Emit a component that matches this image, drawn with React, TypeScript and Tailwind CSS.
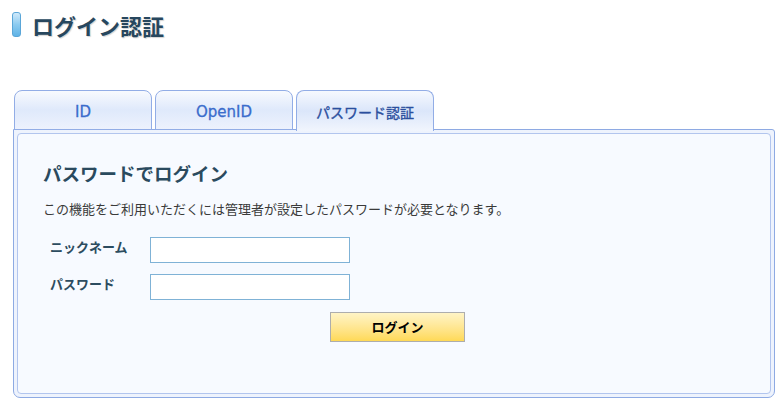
import React from 'react';

const jp = { fontFamily: '"Noto Sans CJK JP", "Noto Sans", sans-serif' };
const latin = { fontFamily: '"DejaVu Sans", "Noto Sans CJK JP", sans-serif' };

const tabs = [
    { label: 'ID', active: false, font: latin },
    { label: 'OpenID', active: false, font: latin },
    { label: 'パスワード認証', active: true, font: jp },
];

export default function App() {
    return (
        <div className="w-[780px] h-[402px] bg-white overflow-hidden" style={jp}>
            {/* page title */}
            <div className="flex items-center pl-[12px] pt-[12px] h-[37px]">
                <div className="w-[9px] h-[25px] rounded-[3px] border border-[#5aa6d8] bg-gradient-to-b from-[#cfe9fa] via-[#8ccbf0] to-[#5fb3e6]" />
                <h1 className="ml-[11px] text-[22px] font-bold leading-none text-[#27475e] [text-shadow:1px_1px_1px_rgba(0,0,0,0.18)]">
                    ログイン認証
                </h1>
            </div>

            {/* tabs */}
            <div className="relative z-10 flex items-end gap-[3px] pl-[14px] mt-[53px] h-[40px]">
                {tabs.map((t) =>
                    t.active ? (
                        <div
                            key={t.label}
                            className="w-[138px] h-[41px] -mb-[1px] flex items-center justify-center pt-[3px] rounded-t-[8px] border border-b-0 border-[#92ade6] bg-gradient-to-b from-[#f6f9fe] via-[#dbe6fa] to-[#f1f5fd] text-[14px] text-[#2b4f9e] [-webkit-text-stroke:0.35px_#2b4f9e]"
                            style={t.font}
                        >
                            {t.label}
                        </div>
                    ) : (
                        <div
                            key={t.label}
                            className="w-[138px] h-[40px] flex items-center justify-center pt-[4px] rounded-t-[8px] border border-[#92ade6] bg-gradient-to-b from-[#f8fafe] via-[#dfe9fb] to-[#edf2fd] text-[15px] text-[#3a6ccc] [-webkit-text-stroke:0.3px_#3a6ccc]"
                            style={t.font}
                        >
                            {t.label}
                        </div>
                    )
                )}
            </div>

            {/* panel */}
            <div className="ml-[13px] w-[762px] h-[269px] -mt-px border border-[#8eaae3] rounded-b-[7px] rounded-tr-[3px] bg-[#eef3fd] p-[3px]">
                <div className="h-full border border-[#b2c5ee] rounded-[4px] bg-[#f7faff] pl-[25px] pt-[27px]">
                    <h2 className="text-[18.5px] font-bold leading-[24px] text-[#2a4a5e]">パスワードでログイン</h2>
                    <p className="mt-[15px] text-[13px] leading-[18px] text-[#3a3a3a]">
                        この機能をご利用いただくには管理者が設定したパスワードが必要となります。
                    </p>

                    <div className="mt-[19px] flex flex-col gap-[11px]">
                        <div className="flex items-start">
                            <label className="w-[107px] pl-[7px] text-[13px] font-bold text-[#2c4c60]">ニックネーム</label>
                            <input type="text" className="w-[200px] h-[26px] border border-[#7fb2d6] bg-white outline-none px-1 text-[13px]" />
                        </div>
                        <div className="flex items-start">
                            <label className="w-[107px] pl-[7px] text-[13px] font-bold text-[#2c4c60]">パスワード</label>
                            <input type="password" className="w-[200px] h-[26px] border border-[#7fb2d6] bg-white outline-none px-1 text-[13px]" />
                        </div>
                    </div>

                    <button
                        type="button"
                        className="mt-[12px] ml-[287px] w-[135px] h-[30px] border border-[#adadad] bg-gradient-to-b from-[#fff4c6] to-[#ffd955] text-[13px] font-bold text-black"
                    >
                        ログイン
                    </button>
                </div>
            </div>
        </div>
    );
}
